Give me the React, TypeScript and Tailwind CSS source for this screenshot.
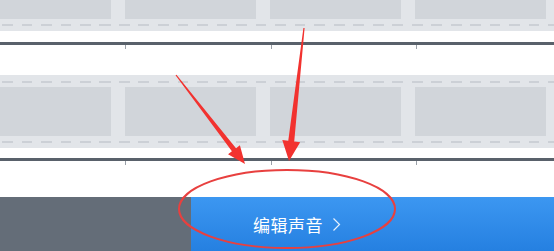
import React from 'react';

const BLOCKS = [0, 1, 2, 3];

function arrowPoints(tx: number, ty: number, hx: number, hy: number, headLen: number, headHalf: number, tailW: number, neckW: number) {
  const dx = hx - tx;
  const dy = hy - ty;
  const len = Math.hypot(dx, dy);
  const ux = dx / len;
  const uy = dy / len;
  const nx = -uy;
  const ny = ux;
  const bx = hx - ux * headLen;
  const by = hy - uy * headLen;
  const pts = [
    [tx + nx * tailW, ty + ny * tailW],
    [bx + nx * neckW, by + ny * neckW],
    [bx + nx * headHalf, by + ny * headHalf],
    [hx, hy],
    [bx - nx * headHalf, by - ny * headHalf],
    [bx - nx * neckW, by - ny * neckW],
    [tx - nx * tailW, ty - ny * tailW],
  ];
  return pts.map((p) => p.join(',')).join(' ');
}

const Dashes = () => (
  <div className="h-[2px] w-full bg-[repeating-linear-gradient(90deg,transparent_0px,transparent_2px,#ccd0d6_2px,#ccd0d6_13px,transparent_13px,transparent_19.5px)]" />
);

const FilmStrip: React.FC<{ className?: string }> = ({ className }) => (
  <div className={`h-[73px] bg-[#e2e5e9] flex flex-col ${className ?? ''}`}>
    <div className="h-[6px]" />
    <Dashes />
    <div className="h-[4px]" />
    <div className="flex gap-[14px] ml-[-20px] h-[49px]">
      {BLOCKS.map((b) => (
        <div key={b} className="w-[131px] shrink-0 bg-[#d1d5da]" />
      ))}
    </div>
    <div className="h-[5px]" />
    <Dashes />
  </div>
);

const TimeLine = () => (
  <div className="relative h-[3px] bg-[#59616b]">
    {[125, 271, 416].map((x) => (
      <div key={x} className="absolute top-[3px] w-px h-[4px] bg-[#9aa0a8]" style={{ left: x }} />
    ))}
  </div>
);

export default function App() {
  return (
    <div className="relative w-[554px] h-[251px] overflow-hidden bg-white flex flex-col font-['Noto_Sans_CJK_SC','Noto_Sans',sans-serif]">
      <FilmStrip className="mt-[-42px]" />
      <div className="h-[11px]" />
      <TimeLine />
      <div className="h-[30px]" />
      <FilmStrip />
      <div className="h-[10px]" />
      <TimeLine />

      {/* bottom action bar */}
      <div className="mt-auto h-[54px] flex">
        <div className="w-[191px] bg-[#646d78]" />
        <button className="flex-1 flex items-center pl-[62px] gap-[9px] bg-gradient-to-b from-[#3c97f1] to-[#2580e1] text-white">
          <span className="text-[17px] leading-none tracking-[0.5px]">编辑声音</span>
          <svg width="9" height="15" viewBox="0 0 9 15" fill="none">
            <polyline points="1.5,1.5 7.5,7.5 1.5,13.5" stroke="#e6f0fd" strokeWidth="1.2" />
          </svg>
        </button>
      </div>

      {/* red annotation overlay */}
      <svg className="absolute inset-0 pointer-events-none" width="554" height="251" viewBox="0 0 554 251">
        <polygon points={arrowPoints(176, 75, 245, 164, 18, 7.5, 0.6, 2.6)} fill="#f2322f" />
        <polygon points={arrowPoints(304, 28, 289, 161, 20, 9, 0.6, 3)} fill="#f2322f" />
        <ellipse cx="287" cy="209" rx="108" ry="39" stroke="#e8403f" strokeWidth="2" fill="none" />
      </svg>
    </div>
  );
}
